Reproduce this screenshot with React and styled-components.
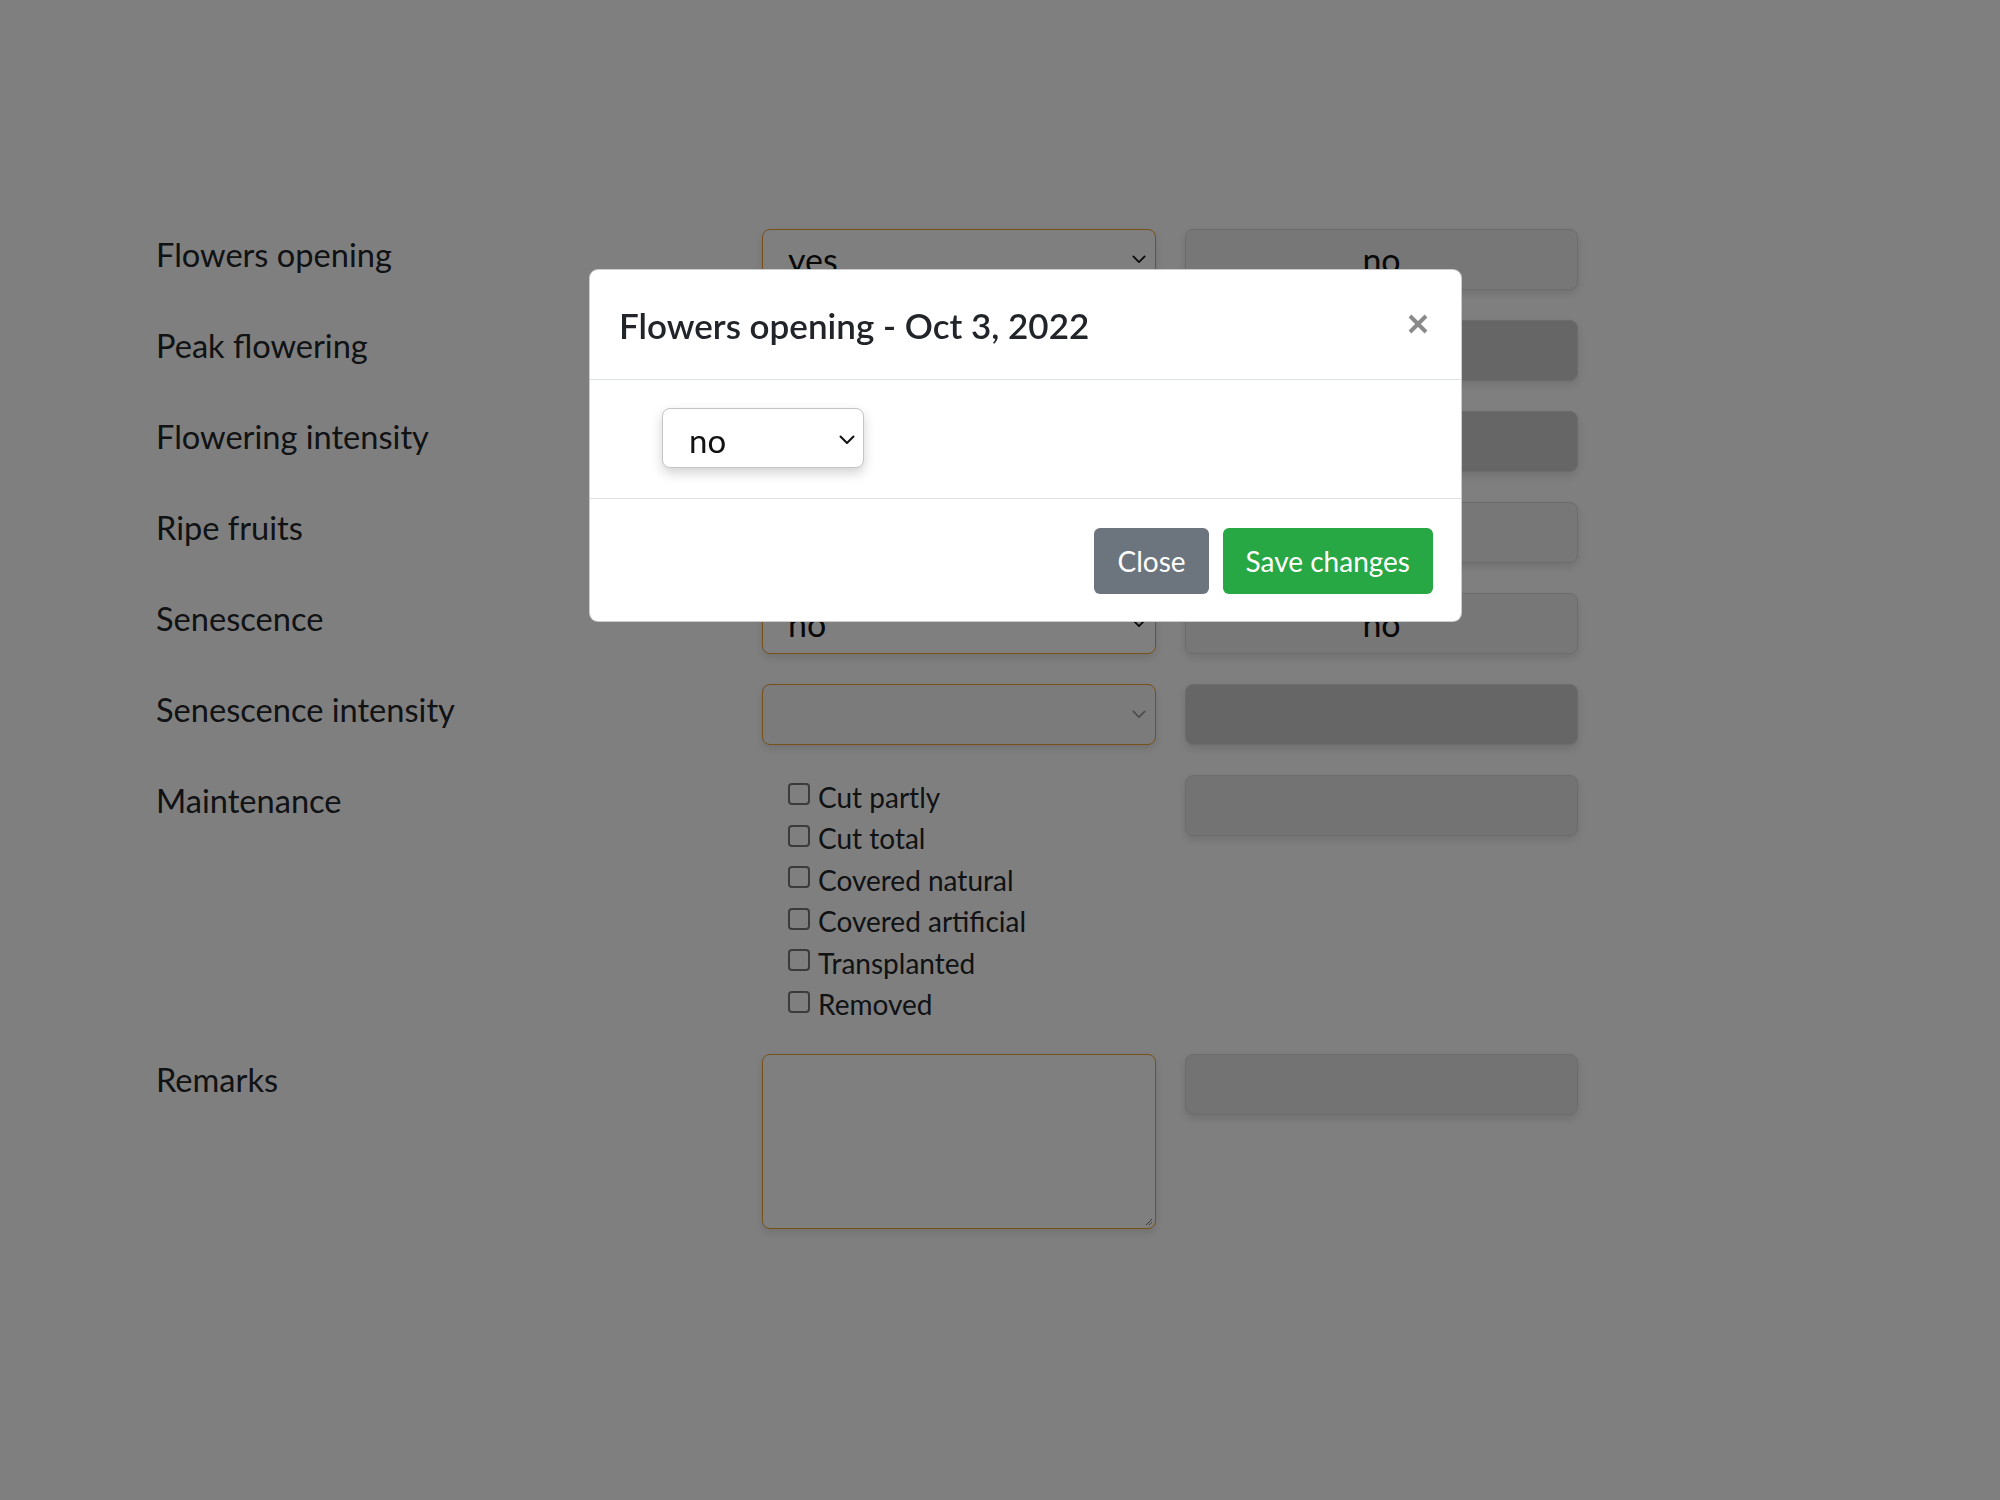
import React from "react";
import styled, { createGlobalStyle } from "styled-components";

const GlobalStyle = createGlobalStyle`
  html, body {
    margin: 0;
    padding: 0;
    background: #ffffff;
  }
  body {
    font-family: "Lato", "Open Sans", sans-serif;
    color: #212529;
  }
`;

const rows = [
  { label: "Flowers opening", value: "yes", other: "no", tone: "light" },
  { label: "Peak flowering", value: "no", other: "", tone: "dark" },
  { label: "Flowering intensity", value: "", other: "", tone: "dark" },
  { label: "Ripe fruits", value: "no", other: "", tone: "light" },
  { label: "Senescence", value: "no", other: "no", tone: "light" },
  { label: "Senescence intensity", value: "", other: "", tone: "dark", disabled: true },
];

const maintenance = [
  "Cut partly",
  "Cut total",
  "Covered natural",
  "Covered artificial",
  "Transplanted",
  "Removed",
];

function Chevron({ size = 14, color = "#111" }) {
  return (
    <svg width={size} height={size / 2 + 2} viewBox="0 0 16 10" fill="none">
      <path d="M1.5 1.5 L8 8 L14.5 1.5" stroke={color} strokeWidth="2" strokeLinecap="round" strokeLinejoin="round" />
    </svg>
  );
}

export default function App() {
  return (
    <>
      <GlobalStyle />
      <Page>
        {rows.map((r) => (
          <Row key={r.label}>
            <Label>{r.label}</Label>
            <Select $disabled={r.disabled}>
              <span>{r.value}</span>
              <Chevron color={r.disabled ? "#9a9a9a" : "#111"} />
            </Select>
            <ReadBox $tone={r.tone}>{r.other}</ReadBox>
          </Row>
        ))}

        <Row>
          <Label>Maintenance</Label>
          <CheckList>
            {maintenance.map((m) => (
              <CheckItem key={m}>
                <CheckBox />
                {m}
              </CheckItem>
            ))}
          </CheckList>
          <ReadBox $tone="mid" />
        </Row>

        <Row>
          <Label>Remarks</Label>
          <TextArea>
            <Grip width="10" height="10" viewBox="0 0 10 10">
              <path d="M9 3 L3 9 M9 6 L6 9" stroke="#7a7a7a" strokeWidth="1" />
            </Grip>
          </TextArea>
          <ReadBox $tone="mid" />
        </Row>
      </Page>

      <Backdrop>
        <Dialog>
          <ModalHeader>
            <ModalTitle>Flowers opening - Oct 3, 2022</ModalTitle>
            <CloseX aria-label="Close">
              <svg width="20" height="20" viewBox="0 0 20 20">
                <path d="M2 2 L18 18 M18 2 L2 18" stroke="#8a8a8a" strokeWidth="4" strokeLinecap="butt" />
              </svg>
            </CloseX>
          </ModalHeader>
          <ModalBody>
            <ModalSelect>
              <span>no</span>
              <Chevron size={16} />
            </ModalSelect>
          </ModalBody>
          <ModalFooter>
            <Button $variant="secondary">Close</Button>
            <Button $variant="success">Save changes</Button>
          </ModalFooter>
        </Dialog>
      </Backdrop>
    </>
  );
}

// =========================== STYLES ============================= //

const Page = styled.div`
  padding: 229px 0 240px 156px;
  display: flex;
  flex-direction: column;
  gap: 30px;
`;

const Row = styled.div`
  display: flex;
  align-items: flex-start;
  min-height: 61px;
`;

const Label = styled.div`
  width: 606px;
  flex-shrink: 0;
  font-size: 32.6px;
  line-height: 1.2;
  padding-top: 6px;
  color: #212529;
`;

const Select = styled.div`
  box-sizing: border-box;
  width: 394px;
  height: 61px;
  margin-right: 29px;
  border: 1px solid #f0a030;
  border-radius: 8px;
  background: ${(p) => (p.$disabled ? "#f6f6f6" : "#ffffff")};
  box-shadow: 0 4px 10px rgba(0, 0, 0, 0.12);
  display: flex;
  align-items: center;
  justify-content: space-between;
  padding: 0 9px 0 25px;
  font-size: 34px;
  color: #111;
`;

const ReadBox = styled.div`
  box-sizing: border-box;
  width: 393px;
  height: 61px;
  border: 1px solid #d8d8d8;
  border-radius: 8px;
  background: ${(p) =>
    p.$tone === "dark" ? "#cccccc" : p.$tone === "mid" ? "#e6e6e6" : "#eeeeee"};
  box-shadow: 0 4px 10px rgba(0, 0, 0, 0.12);
  display: flex;
  align-items: center;
  justify-content: center;
  font-size: 34px;
  color: #111;
`;

const CheckList = styled.div`
  width: 394px;
  margin-right: 29px;
  padding: 1px 0 0 26px;
  box-sizing: border-box;
  display: flex;
  flex-direction: column;
  margin-bottom: -1px;
`;

const CheckItem = styled.label`
  display: flex;
  align-items: center;
  gap: 8px;
  height: 41.5px;
  font-size: 28px;
  color: #212529;
`;

const CheckBox = styled.span`
  box-sizing: border-box;
  width: 22px;
  height: 22px;
  border: 2px solid #767676;
  border-radius: 4px;
  background: #ffffff;
  margin-top: -5px;
`;

const TextArea = styled.div`
  box-sizing: border-box;
  position: relative;
  width: 394px;
  height: 175px;
  margin-right: 29px;
  border: 1px solid #f0a030;
  border-radius: 8px;
  background: #ffffff;
  box-shadow: 0 4px 10px rgba(0, 0, 0, 0.12);
`;

const Grip = styled.svg`
  position: absolute;
  right: 2px;
  bottom: 2px;
`;

const Backdrop = styled.div`
  position: fixed;
  inset: 0;
  background: rgba(0, 0, 0, 0.5);
`;

const Dialog = styled.div`
  box-sizing: border-box;
  width: 873px;
  margin: 269px 0 0 589px;
  background: #ffffff;
  border: 1px solid rgba(0, 0, 0, 0.2);
  border-radius: 9px;
  overflow: hidden;
`;

const ModalHeader = styled.div`
  box-sizing: border-box;
  height: 110px;
  padding: 0 33px 0 29px;
  display: flex;
  align-items: center;
  justify-content: space-between;
  border-bottom: 1px solid #dee2e6;
`;

const ModalTitle = styled.h5`
  margin: 0;
  font-size: 35px;
  font-weight: 600;
  line-height: 1.2;
  color: #212529;
`;

const CloseX = styled.span`
  display: flex;
  align-items: center;
  margin-top: -2px;
`;

const ModalBody = styled.div`
  box-sizing: border-box;
  height: 118px;
  padding: 28px 30px 0 72px;
`;

const ModalSelect = styled.div`
  box-sizing: border-box;
  width: 202px;
  height: 60px;
  border: 1px solid #c4c4c4;
  border-radius: 8px;
  background: #ffffff;
  box-shadow: 0 5px 12px rgba(0, 0, 0, 0.18);
  display: flex;
  align-items: center;
  justify-content: space-between;
  padding: 4px 8px 0 26px;
  font-size: 33px;
  color: #111;
`;

const ModalFooter = styled.div`
  box-sizing: border-box;
  height: 123px;
  border-top: 1px solid #dee2e6;
  padding: 29px 28px 0 0;
  display: flex;
  justify-content: flex-end;
  align-items: flex-start;
  gap: 14px;
`;

const Button = styled.button`
  box-sizing: border-box;
  height: 66px;
  padding: 0 23px;
  border: none;
  border-radius: 6px;
  font-family: "Lato", "Open Sans", sans-serif;
  font-size: 28px;
  color: #ffffff;
  background: ${(p) => (p.$variant === "success" ? "#28a745" : "#6c757d")};
  cursor: pointer;
`;
